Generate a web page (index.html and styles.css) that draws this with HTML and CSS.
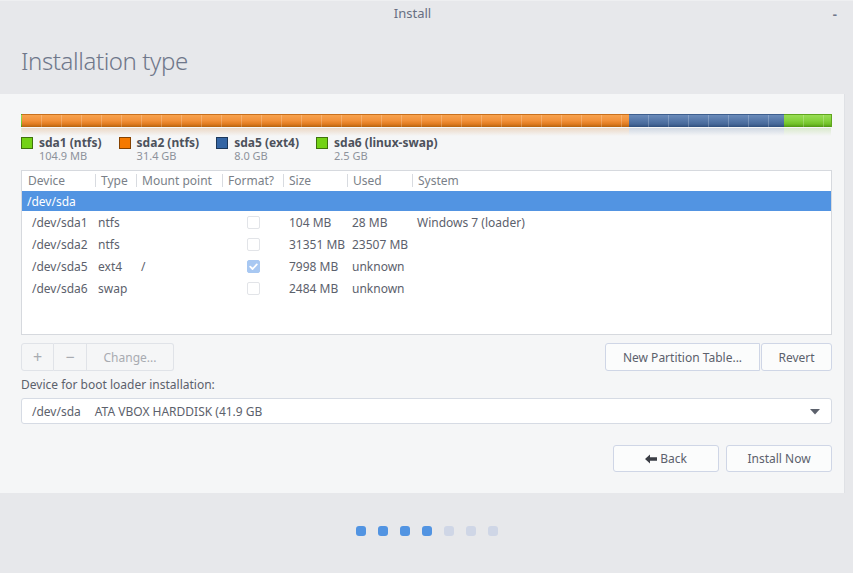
FILE: index.html
```html
<!DOCTYPE html>
<html>
<head>
<meta charset="utf-8">
<title>Install</title>
<link rel="stylesheet" href="styles.css">
</head>
<body>
<div class="window">
  <div class="titlebar">
    <span class="title">Install</span>
    <span class="minimize">-</span>
  </div>
  <div class="header">
    <h1>Installation type</h1>
  </div>
  <div class="content">
    <div class="bar">
      <div class="seg green" style="width:1px"></div>
      <div class="seg orange" style="width:607px"></div>
      <div class="seg blue" style="width:155px"></div>
      <div class="seg green" style="width:48px"></div>
    </div>
    <div class="legend">
      <div class="leg-item">
        <span class="swatch green"></span>
        <div class="leg-text"><div class="leg-name">sda1 (ntfs)</div><div class="leg-size">104.9 MB</div></div>
      </div>
      <div class="leg-item">
        <span class="swatch orange"></span>
        <div class="leg-text"><div class="leg-name">sda2 (ntfs)</div><div class="leg-size">31.4 GB</div></div>
      </div>
      <div class="leg-item">
        <span class="swatch blue"></span>
        <div class="leg-text"><div class="leg-name">sda5 (ext4)</div><div class="leg-size">8.0 GB</div></div>
      </div>
      <div class="leg-item">
        <span class="swatch green"></span>
        <div class="leg-text"><div class="leg-name">sda6 (linux-swap)</div><div class="leg-size">2.5 GB</div></div>
      </div>
    </div>

    <div class="table">
      <div class="row head">
        <div class="c c1">Device</div>
        <div class="c c2 sep">Type</div>
        <div class="c c3 sep">Mount point</div>
        <div class="c c4 sep">Format?</div>
        <div class="c c5 sep">Size</div>
        <div class="c c6 sep">Used</div>
        <div class="c c7 sep">System</div>
      </div>
      <div class="row selected">
        <div class="c disk">/dev/sda</div>
      </div>
      <div class="row part">
        <div class="c c1">/dev/sda1</div>
        <div class="c c2">ntfs</div>
        <div class="c c3"></div>
        <div class="c c4"><span class="check"></span></div>
        <div class="c c5">104 MB</div>
        <div class="c c6">28 MB</div>
        <div class="c c7">Windows 7 (loader)</div>
      </div>
      <div class="row part">
        <div class="c c1">/dev/sda2</div>
        <div class="c c2">ntfs</div>
        <div class="c c3"></div>
        <div class="c c4"><span class="check"></span></div>
        <div class="c c5">31351 MB</div>
        <div class="c c6">23507 MB</div>
        <div class="c c7"></div>
      </div>
      <div class="row part">
        <div class="c c1">/dev/sda5</div>
        <div class="c c2">ext4</div>
        <div class="c c3">/</div>
        <div class="c c4"><span class="check checked"><svg viewBox="0 0 13 13" width="13" height="13"><path d="M3.2 6.6 L5.6 9 L9.8 4.4" fill="none" stroke="#fff" stroke-width="1.8" stroke-linecap="round" stroke-linejoin="round"/></svg></span></div>
        <div class="c c5">7998 MB</div>
        <div class="c c6">unknown</div>
        <div class="c c7"></div>
      </div>
      <div class="row part">
        <div class="c c1">/dev/sda6</div>
        <div class="c c2">swap</div>
        <div class="c c3"></div>
        <div class="c c4"><span class="check"></span></div>
        <div class="c c5">2484 MB</div>
        <div class="c c6">unknown</div>
        <div class="c c7"></div>
      </div>
    </div>

    <div class="toolrow">
      <div class="linked">
        <button class="btn dis sq">+</button>
        <button class="btn dis sq">&#8722;</button>
        <button class="btn dis change">Change...</button>
      </div>
      <div class="linked right">
        <button class="btn newtable">New Partition Table...</button>
        <button class="btn revert">Revert</button>
      </div>
    </div>

    <div class="bootlabel">Device for boot loader installation:</div>
    <div class="combo">
      <span class="combo-text"><span class="dev">/dev/sda</span>ATA VBOX HARDDISK (41.9 GB</span>
      <svg class="arrow" width="10" height="6" viewBox="0 0 10 6"><path d="M0 0 H10 L5 5.5 Z" fill="#5c616c"/></svg>
    </div>

    <div class="actions">
      <button class="btn act"><svg width="13" height="10" viewBox="0 0 13 10"><path d="M0 5 L5 0.5 V3.2 H12 V6.8 H5 V9.5 Z" fill="#3b3e45"/></svg>Back</button>
      <button class="btn act">Install Now</button>
    </div>
  </div>
  <div class="footer">
    <span class="dot on"></span>
    <span class="dot on"></span>
    <span class="dot on"></span>
    <span class="dot on"></span>
    <span class="dot"></span>
    <span class="dot"></span>
    <span class="dot"></span>
  </div>
</div>
</body>
</html>
```

FILE: styles.css
```css
* { box-sizing: border-box; }
html, body { margin: 0; padding: 0; }
body {
  width: 853px;
  height: 573px;
  overflow: hidden;
  background: #e7e8eb;
  font-family: "Noto Sans", "Open Sans", sans-serif;
  font-size: 12px;
  color: #5c616c;
}
.window { width: 853px; height: 573px; display: flex; flex-direction: column; }

.titlebar {
  height: 28px;
  display: flex;
  align-items: center;
  justify-content: center;
  position: relative;
  padding-right: 28px;
  border-top: 1px solid #eeeff1;
}
.title { font-size: 13px; color: #676f82; margin-top: -4px; }
.minimize { position: absolute; right: 16px; top: 4px; font-size: 13px; color: #6f778a; font-weight: bold; }

.header { height: 66px; padding: 16px 0 0 21px; }
.header h1 {
  margin: 0;
  font-weight: 300;
  font-size: 24px;
  color: #6f778a;
  letter-spacing: -0.4px;
}

.content {
  height: 399px;
  width: 845px;
  background: #f5f6f7;
  border-right: 1px solid #dfe1e5;
  padding: 20px 13px 0 21px;
}

.bar {
  display: flex;
  height: 13px;
  width: 811px;
  position: relative;
}
.seg { height: 13px; position: relative; }
.seg::before {
  content: "";
  position: absolute;
  inset: 0;
  background: repeating-linear-gradient(90deg, transparent 0 19px, rgba(255,255,255,0.22) 19px 20px);
}
.seg::after {
  content: "";
  position: absolute;
  left: 0; right: 0; top: 13px;
  height: 8px;
  opacity: 0.35;
}
.seg.orange { background: linear-gradient(#f7a24e, #f2913a 45%, #e17c21 75%, #b4620f); border-top: 1px solid #c9701d; }
.seg.orange::after { background: linear-gradient(#d9a06a, rgba(245,246,247,0)); }
.seg.blue { background: linear-gradient(#6a8bba, #5577a8 45%, #47699a 75%, #2f4e7c); border-top: 1px solid #3e5f8e; }
.seg.blue::after { background: linear-gradient(#8ca0bd, rgba(245,246,247,0)); }
.seg.green { background: linear-gradient(#98dd55, #84d23c 45%, #71c227 75%, #4f9612); border-top: 1px solid #5fa61e; }
.seg.green::after { background: linear-gradient(#a8d27f, rgba(245,246,247,0)); }
.seg:last-child { border-right: 1px solid #5fa61e; }

.legend {
  display: flex;
  margin-top: 8px;
  height: 29px;
}
.leg-item { display: flex; align-items: flex-start; margin-right: 17px; }
.swatch {
  width: 12px; height: 12px;
  margin-top: 2px;
  margin-right: 6px;
  border: 1px solid rgba(0,0,0,0.45);
}
.swatch.green { background: #73d216; }
.swatch.orange { background: #f57900; }
.swatch.blue { background: #3465a4; }
.leg-name { font-weight: bold; font-size: 12px; line-height: 15px; color: #4d525c; }
.leg-size { font-size: 11px; line-height: 12px; color: #8d929b; }

.table {
  margin-top: 6px;
  width: 811px;
  height: 165px;
  background: #fff;
  border: 1px solid #d6d9de;
}
.row { display: flex; align-items: center; }
.row.head { height: 20px; color: #7a7f88; padding-bottom: 1px; }
.row.selected { height: 20px; background: #5294e2; color: #fff; }
.row.part { height: 22px; color: #5c616c; }
.c { white-space: nowrap; padding-left: 5px; position: relative; }
.c1 { width: 73px; }
.c2 { width: 41px; }
.c3 { width: 86px; }
.c4 { width: 61px; }
.c5 { width: 64px; }
.c6 { width: 65px; }
.c7 { flex: 1; }
.head .c { padding-left: 6px; }
.head .sep::before {
  content: "";
  position: absolute;
  left: 0; top: 2px;
  width: 1px; height: 13px;
  background: #d8dbe0;
}
.part .c1 { padding-left: 10px; }
.part .c2 { padding-left: 3px; }
.part .c4 { display: flex; justify-content: center; padding-left: 0; }
.part .c5 { padding-left: 6px; }
.disk { padding-left: 5px; }
.check {
  width: 13px; height: 13px;
  border: 1px solid #e2e4e8;
  border-radius: 2px;
  background: #fff;
  display: block;
  margin-left: 2px;
}
.check.checked { background: #a8c8f2; border-color: #a8c8f2; position: relative; }
.check.checked svg { position: absolute; left: -1px; top: -1px; }

.toolrow { display: flex; justify-content: space-between; margin-top: 8px; width: 811px; }
.linked { display: flex; }
.btn {
  font-family: inherit;
  font-size: 12px;
  color: #5c616c;
  height: 28px;
  background: #fbfcfc;
  border: 1px solid #cfd6e6;
  border-radius: 3px;
  padding: 0;
  display: flex;
  align-items: center;
  justify-content: center;
}
.btn.dis { color: #a8abb1; background: #f5f6f7; border-color: #e0e3e8; }
.linked .btn + .btn { border-left: none; }
.linked .btn:not(:first-child) { border-top-left-radius: 0; border-bottom-left-radius: 0; }
.linked .btn:not(:last-child) { border-top-right-radius: 0; border-bottom-right-radius: 0; }
.sq { width: 33px; font-size: 16px; }
.change { width: 87px; }
.newtable { width: 155px; }
.revert { width: 71px; border-left: 1px solid #cfd6e6 !important; margin-left: 1px; border-radius: 3px !important; }

.bootlabel { margin-top: 3px; height: 21px; line-height: 21px; color: #5c616c; }
.combo {
  margin-top: 3px;
  width: 811px;
  height: 26px;
  background: #fff;
  border: 1px solid #d6dbe4;
  border-radius: 3px;
  display: flex;
  align-items: center;
  justify-content: space-between;
  padding: 0 11px 0 10px;
}
.dev { margin-right: 14px; }
.arrow { margin-top: 1px; }

.actions { display: flex; justify-content: flex-end; gap: 7px; margin-top: 21px; width: 811px; }
.act { width: 106px; height: 27px; }
.act svg { margin-right: 2px; }

.footer {
  flex: 1;
  display: flex;
  justify-content: center;
  align-items: flex-start;
  padding-top: 33px;
  gap: 12px;
}
.dot { width: 10px; height: 10px; border-radius: 3px; background: #cfd6e6; }
.dot.on { background: #5294e2; }
```
